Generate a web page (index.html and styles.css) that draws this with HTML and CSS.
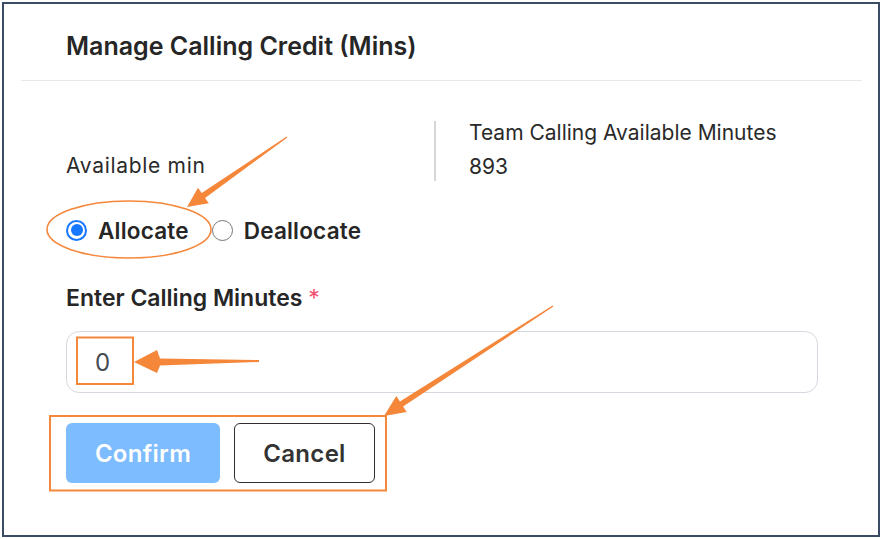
FILE: index.html
```html
<!DOCTYPE html>
<html>
<head>
<meta charset="utf-8">
<link rel="stylesheet" href="styles.css">
</head>
<body>
<div class="frame">
  <div class="header">
    <h1 class="title">Manage Calling Credit (Mins)</h1>
  </div>
  <div class="body">
    <div class="info-row">
      <div class="info-left"><div class="info-label">Available min</div></div>
      <div class="info-right">
        <div class="info-line">Team Calling Available Minutes</div>
        <div class="info-line second">893</div>
      </div>
    </div>
    <div class="radio-row">
      <label class="radio"><span class="dot checked"></span><span class="radio-text">Allocate</span></label>
      <label class="radio"><span class="dot"></span><span class="radio-text">Deallocate</span></label>
    </div>
    <div class="field-label">Enter Calling Minutes <span class="req">*</span></div>
    <div class="input"><span class="input-value">0</span></div>
    <div class="buttons">
      <button class="btn btn-confirm">Confirm</button>
      <button class="btn btn-cancel">Cancel</button>
    </div>
  </div>
  <svg class="annot" width="883" height="539" viewBox="0 0 883 539">
    <ellipse cx="129" cy="229.5" rx="82" ry="28.5" fill="none" stroke="#f5873b" stroke-width="1.6"/>
    <polygon fill="#f5873b" points="287.4,137.4 205.1,198 208.8,203.3 187,207 198,187.7 201.7,193 286.6,136.6"/>
    <rect x="77" y="337.5" width="56" height="46.5" fill="none" stroke="#f5873b" stroke-width="2"/>
    <polygon fill="#f5873b" points="259,360 160,358.5 157,350 134,362 157,373 160,365.5 259,362"/>
    <rect x="50" y="416" width="336" height="74.5" fill="none" stroke="#f5873b" stroke-width="2"/>
    <polygon fill="#f5873b" points="553.4,306.6 403.1,406.6 406.7,412.1 384,416 396.3,396.1 399.9,401.6 552.6,305.4"/>
  </svg>
</div>
</body>
</html>
```
FILE: styles.css
```css
* { box-sizing: border-box; }
html, body { margin: 0; padding: 0; background: #ffffff; }
body {
  font-family: "Inter", "Liberation Sans", sans-serif;
  color: #2a2a2a;
  width: 883px;
  height: 539px;
  overflow: hidden;
}
.frame {
  position: relative;
  margin: 2px;
  width: 878px;
  height: 535px;
  border: 2px solid #3b4b66;
  background: #fff;
}
.header {
  margin: 0 16px 0 17px;
  height: 77px;
  border-bottom: 1px solid #e4e9ee;
  padding-left: 45px;
  padding-top: 8px;
  display: flex;
  align-items: center;
}
.title {
  margin: 0;
  font-size: 25px;
  font-weight: 600;
  color: #262626;
}
.body {
  padding-left: 62px;
}
.info-row {
  margin-top: 40px;
  display: flex;
  height: 60px;
}
.info-left {
  width: 368px;
  display: flex;
  align-items: flex-end;
}
.info-label {
  font-size: 21px;
  letter-spacing: 0.7px;
  line-height: 24px;
  margin-bottom: 3px;
  color: #2a2a2a;
}
.info-right {
  border-left: 2px solid #d6d6d6;
  padding-left: 33px;
}
.info-line {
  font-size: 21px;
  line-height: 24px;
  color: #2a2a2a;
}
.info-line.second { margin-top: 10px; }
.radio-row {
  margin-top: 35px;
  height: 28px;
  display: flex;
  align-items: center;
}
.radio {
  display: flex;
  align-items: center;
}
.radio + .radio { margin-left: 23px; }
.dot {
  width: 21px;
  height: 21px;
  border-radius: 50%;
  border: 1.5px solid #767676;
  background: #fff;
  position: relative;
}
.dot.checked {
  border: 2px solid #1677ff;
}
.dot.checked::after {
  content: "";
  position: absolute;
  left: 2.5px; top: 2.5px;
  width: 12px; height: 12px;
  border-radius: 50%;
  background: #1677ff;
}
.radio-text {
  margin-left: 11px;
  font-size: 22.5px;
  letter-spacing: 0.2px;
  font-weight: 600;
  color: #262626;
}
.field-label {
  margin-top: 40px;
  font-size: 23px;
  line-height: 28px;
  font-weight: 600;
  color: #262626;
}
.req { color: #f3506f; font-weight: 400; }
.input {
  margin-top: 19px;
  width: 752px;
  height: 62px;
  border: 1px solid #d5d9df;
  border-radius: 13px;
  display: flex;
  align-items: center;
  padding-left: 28px;
}
.input-value {
  font-size: 24px;
  color: #454a52;
}
.buttons {
  margin-top: 30px;
  display: flex;
  gap: 14px;
}
.btn {
  height: 60px;
  border-radius: 6px;
  font-family: inherit;
  font-size: 24px;
  letter-spacing: 0.3px;
  font-weight: 600;
  cursor: pointer;
}
.btn-confirm {
  width: 154px;
  background: #7dbcfe;
  border: none;
  color: #ffffff;
}
.btn-cancel {
  width: 141px;
  background: #fff;
  border: 1px solid #2f2f2f;
  color: #333333;
}
.annot {
  position: absolute;
  left: -4px;
  top: -4px;
  pointer-events: none;
}
```
